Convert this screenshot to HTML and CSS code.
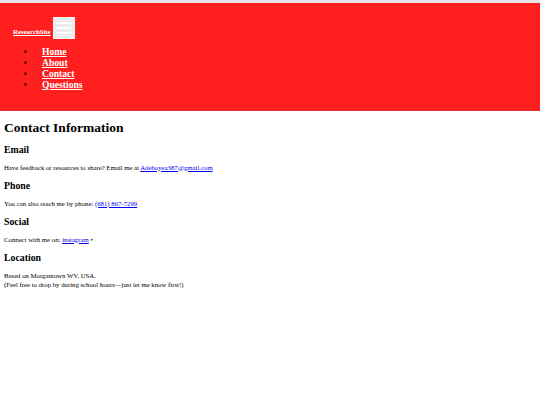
FILE: index.html
```html
<!DOCTYPE html>
<html lang="en">
<head>
<meta charset="utf-8">
<title>Contact</title>
<link rel="stylesheet" href="styles.css">
</head>
<body>
<div class="topline"></div>
<header class="site-header">
  <div class="brand-row">
    <a class="brand" href="#">ResearchSite</a>
    <button class="menu-btn" type="button" aria-label="Menu">
      <span class="bar"></span><span class="bar"></span><span class="bar"></span>
    </button>
  </div>
  <ul class="nav">
    <li><a href="#">Home</a></li>
    <li><a href="#">About</a></li>
    <li><a href="#">Contact</a></li>
    <li><a href="#">Questions</a></li>
  </ul>
</header>
<main class="content">
  <h1>Contact Information</h1>
  <h2>Email</h2>
  <p>Have feedback or resources to share? Email me at <a href="#">Adeboyea387@gmail.com</a></p>
  <h2>Phone</h2>
  <p>You can also reach me by phone: <a href="#">(681) 867-7299</a></p>
  <h2>Social</h2>
  <p>Connect with me on: <a href="#">instagram</a> &bull;</p>
  <h2>Location</h2>
  <p>Based on Morgantown WV, USA.<br>(Feel free to drop by during school hours—just let me know first!)</p>
</main>
</body>
</html>
```
FILE: styles.css
```css
html, body {
  margin: 0;
  padding: 0;
  background: #fff;
  font-family: "Liberation Serif", "Times New Roman", serif;
  color: #000;
}
.topline {
  height: 3px;
  background: #e6e6e6;
}
.site-header {
  background: #ff1f1f;
  border-bottom: 1px solid #d83030;
  padding: 14px 0 20px 13px;
}
.brand-row {
  display: flex;
  align-items: flex-end;
  gap: 2px;
}
.brand {
  color: #fff;
  font-size: 6.8px;
  font-weight: bold;
  line-height: 8px;
  margin-bottom: 3px;
}
.menu-btn {
  width: 22px;
  height: 22px;
  padding: 0;
  margin: 0;
  background: #ececec;
  border: 1px solid #f6f6f6;
  display: flex;
  flex-direction: column;
  align-items: center;
  justify-content: center;
  gap: 3px;
}
.menu-btn .bar {
  display: block;
  width: 15px;
  height: 2px;
  background: #fff;
}
.nav {
  margin: 7px 0 0 0;
  padding-left: 24px;
  list-style: disc;
  color: #6a1010;
  font-size: 9.6px;
  line-height: 11px;
}
.nav li {
  padding-left: 5px;
}
.nav a {
  color: #fff;
  font-weight: bold;
}
.content {
  padding: 0 4px;
}
h1 {
  font-size: 13.5px;
  margin: 8.5px 0 8px;
}
h2 {
  font-size: 9.8px;
  margin: 8px 0;
}
p {
  font-size: 6.75px;
  margin: 7px 0;
  line-height: 9px;
}
p a {
  color: #0000ee;
}
```
